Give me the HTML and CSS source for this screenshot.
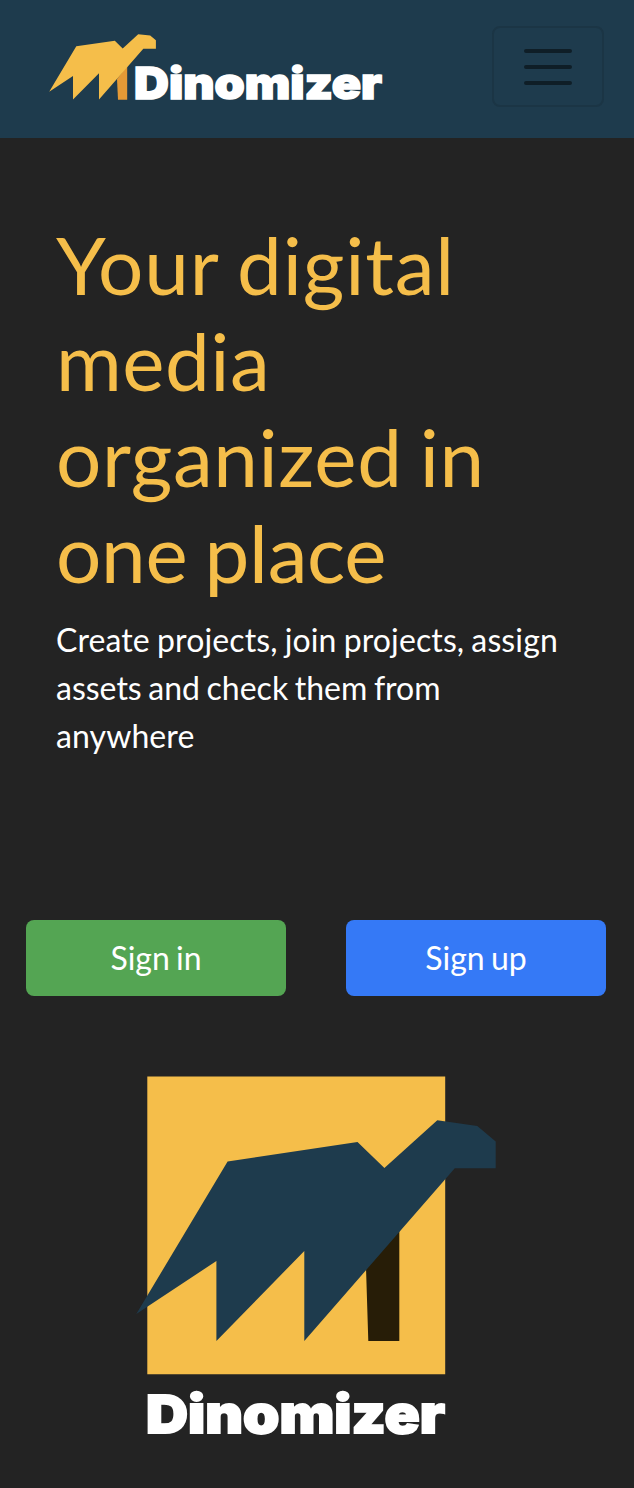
FILE: index.html
```html
<!DOCTYPE html>
<html lang="en">
<head>
<meta charset="utf-8">
<title>Dinomizer</title>
<link rel="stylesheet" href="styles.css">
</head>
<body>
<header class="navbar">
  <svg class="brand" viewBox="48 30 352 90" role="img" aria-label="Dinomizer">
    <path class="brand-leg" d="M117 79L127.2 66V99.7H118Z"/>
    <path class="brand-dino" d="M49.2 91.7L76.3 46.3L114.8 40.8L122.7 48.6L138.2 34.2L150.2 35.6L155.9 40.3V48.7H143.3L99 99.6V73.3L73 99.6V76Z"/>
    <text class="wordmark wordmark-small" x="134" y="99" textLength="248" lengthAdjust="spacingAndGlyphs">Dinomizer</text>
  </svg>
  <button class="toggler" aria-label="Toggle navigation">
    <span class="toggler-bar"></span>
    <span class="toggler-bar"></span>
    <span class="toggler-bar"></span>
  </button>
</header>
<main>
  <section class="hero">
    <h1 class="hero-title">
      <span class="line title-line-1">Your digital</span>
      <span class="line title-line-2">media</span>
      <span class="line title-line-3">organized in</span>
      <span class="line title-line-4">one place</span>
    </h1>
    <p class="hero-text">
      <span class="line text-line-1">Create projects, join projects, assign</span>
      <span class="line text-line-2">assets and check them from</span>
      <span class="line text-line-3">anywhere</span>
    </p>
  </section>
  <div class="actions">
    <a class="btn btn-signin">Sign in</a>
    <a class="btn btn-signup">Sign up</a>
  </div>
  <svg class="logo" viewBox="130 1070 374 390" role="img" aria-label="Dinomizer logo">
    <path class="logo-tile" d="M147.3 1076.5H445.2V1374.3H147.3Z"/>
    <path class="logo-leg" d="M366 1268L399.3 1230V1341H368.3Z"/>
    <path class="logo-dino" d="M136.3 1314L227.6 1161.6L357.5 1142L384.4 1168L437.3 1120.3L477.3 1126L495.7 1141.6V1168.3H454.8L304.3 1341V1251L216.4 1341V1261Z"/>
    <text class="wordmark wordmark-large" x="146" y="1433.4" textLength="299" lengthAdjust="spacingAndGlyphs">Dinomizer</text>
  </svg>
</main>
</body>
</html>
```
FILE: styles.css
```css
* {
  box-sizing: border-box;
}

body {
  margin: 0;
  background: #232323;
  color: #fff;
  font-family: Lato, sans-serif;
  font-size: 32px;
  line-height: 1.5;
}

.navbar {
  display: flex;
  justify-content: space-between;
  align-items: flex-start;
  height: 138px;
  padding: 26px 30px 0 48px;
  background: #1e3b4d;
}

.brand {
  width: 352px;
  height: 90px;
  margin-top: 4px;
}

.brand-dino,
.logo-tile {
  fill: #f5be4a;
}

.brand-leg {
  fill: #e49a36;
}

.wordmark {
  fill: #fff;
  stroke: #fff;
  font-family: Inter, sans-serif;
  font-weight: 900;
}

.wordmark-small {
  font-size: 43.6px;
  stroke-width: 1.6px;
}

.wordmark-large {
  font-size: 52.4px;
  stroke-width: 1.9px;
}

.toggler {
  display: flex;
  flex-direction: column;
  justify-content: center;
  align-items: center;
  gap: 12px;
  width: 112px;
  height: 81px;
  padding: 0;
  border: 2px solid #1b3545;
  border-radius: 8px;
  background: none;
}

.toggler-bar {
  width: 48px;
  height: 4px;
  border-radius: 2px;
  background: #0f1e27;
}

.hero {
  height: 782px;
  padding: 78px 56px 0;
}

.line {
  display: block;
  white-space: nowrap;
}

.hero-title {
  margin: 0 0 16px;
  color: #f5be4a;
  font-size: 80px;
  font-weight: 400;
  line-height: 1.2;
}

.title-line-1 {
  letter-spacing: 0.85px;
  word-spacing: -2.3px;
}

.title-line-2 {
  letter-spacing: 0.5px;
}

.title-line-3 {
  letter-spacing: 0.6px;
  word-spacing: -4px;
}

.title-line-4 {
  letter-spacing: -0.3px;
  word-spacing: -3px;
}

.hero-text {
  margin: 0;
}

.text-line-1 {
  letter-spacing: 0.12px;
  word-spacing: -1.2px;
}

.text-line-2 {
  word-spacing: -1.6px;
}

.text-line-3 {
  letter-spacing: 0.1px;
}

.actions {
  display: flex;
  gap: 60px;
  padding: 0 26px;
}

.btn {
  width: 260px;
  height: 76px;
  padding: 14px 0;
  border-radius: 8px;
  text-align: center;
  word-spacing: -2px;
}

.btn-signin {
  background: #54a553;
}

.btn-signup {
  background: #3579f6;
}

.logo {
  display: block;
  width: 374px;
  height: 390px;
  margin: 74px 0 28px 130px;
}

.logo-dino {
  fill: #1e3b4d;
}

.logo-leg {
  fill: #271d07;
}
```
